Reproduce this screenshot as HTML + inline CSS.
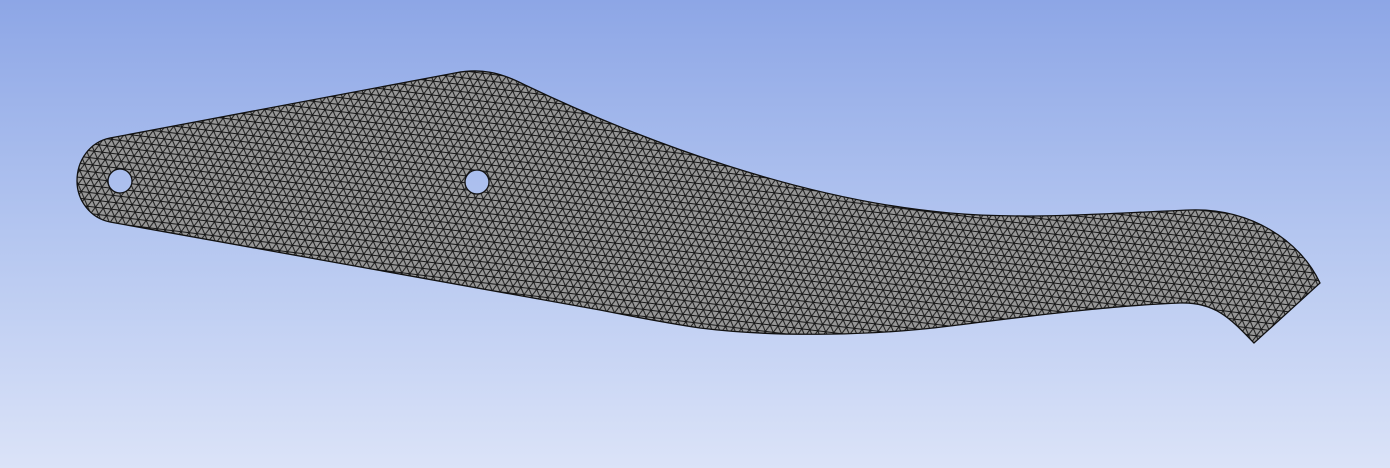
<!DOCTYPE html>
<html><head><style>
html,body{margin:0;padding:0;width:1390px;height:468px;overflow:hidden}
body{background:linear-gradient(#8da6e6 0%,#b4c6f0 50%,#dbe3f8 100%)}
</style></head><body>
<svg width="1390" height="468" viewBox="0 0 1390 468" style="position:absolute;left:0;top:0">
<defs>
<pattern id="m" width="8" height="13.86" patternUnits="userSpaceOnUse" patternTransform="rotate(7)">
<rect width="8" height="13.86" fill="#979797"/>
<path d="M0 0H8M0 6.93H8M0 13.86H8M0 0L8 13.86M8 0L0 13.86M4 6.93L0 0M4 6.93L8 0" stroke="#151515" stroke-width="0.95" fill="none"/>
</pattern>
</defs>
<path fill="url(#m)" stroke="#111" stroke-width="1.3" fill-rule="evenodd" d="
M110 138 L455 73 C480 68 500 72 525 85 C640 140 800 200 950 213 C1030 220 1110 213 1190 210 C1250 208 1300 240 1320 283 L1254 343 C1230 318 1215 302 1180 303 C1100 306 1000 320 950 326 C880 335 780 338 700 328 C660 322 630 316 600 310 L110 222 C90 218 77 200 77 181 C77 160 90 142 110 138 Z
M108 181 a12 12 0 1 0 24 0 a12 12 0 1 0 -24 0 Z
M465 182 a12 12 0 1 0 24 0 a12 12 0 1 0 -24 0 Z"/>
</svg>
</body></html>
